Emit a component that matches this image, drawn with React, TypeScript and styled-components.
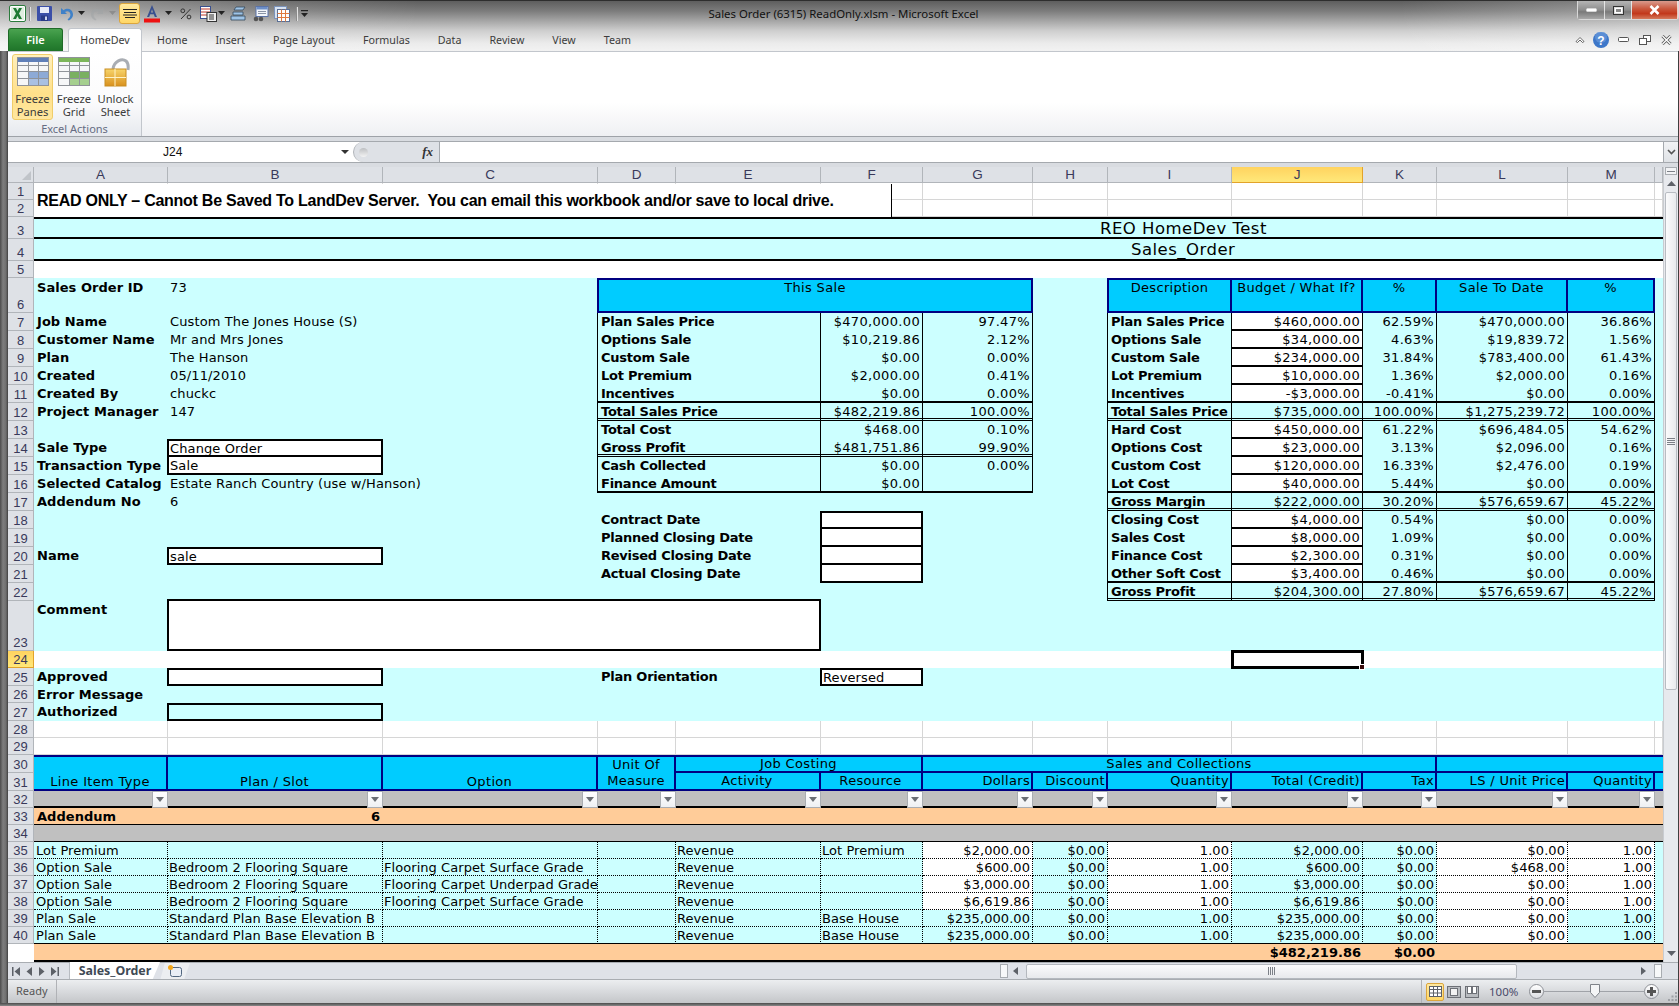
import React from "react";
import styled, { createGlobalStyle } from "styled-components";

const GlobalStyle = createGlobalStyle`
  html, body { margin: 0; padding: 0; background: #fff; }
  #root { width: 1679px; height: 1006px; overflow: hidden; }
`;

const UI = `"Noto Sans", "Open Sans", "Liberation Sans", sans-serif`;
const CELLFONT = `"DejaVu Sans", "Liberation Sans", sans-serif`;
const NAVY2 = "2px solid #000080";
const K1 = "1px solid #000";
const K2 = "2px solid #000";
const K3 = "3px solid #000";
const DBL = "3px double #000";
const DOT = "1px dotted #000";
const CYAN = "#ccffff";
const SKY = "#00ccff";
const PEACH = "#ffcc99";
const GRAY = "#c0c0c0";

const COLS = "ABCDEFGHIJKLMN";
const COL_W = [134, 215, 215, 78, 145, 102, 110, 75, 124, 131, 74, 131, 87, 8];
const ROW_H = [17, 17, 22, 22, 17, 35, ...Array(16).fill(18), 50, 17, 18, 17, 18, 17, 17, 18, 18, 17, 17, 17, 17, 17, 17, 17, 17, 17];
const ci = (l: string) => COLS.indexOf(l);
const topFor = (b?: string) => (b === K2 ? 2 : b === DBL ? 3 : b === K1 ? 1 : 0);

const Window = styled.div`
  position: relative;
  width: 1679px;
  height: 1006px;
  display: flex;
  flex-direction: column;
  overflow: hidden;
  background: #5f5f5f;
`;
const Glass = styled.div`
  height: 51px;
  flex: none;
  display: flex;
  flex-direction: column;
  border-top: 1px solid #2e2e2e;
  box-sizing: border-box;
  background:
    linear-gradient(90deg, rgba(255,255,255,.42) 0, rgba(255,255,255,.12) 260px, rgba(255,255,255,0) 420px, rgba(255,255,255,0) 1400px, rgba(255,255,255,.3) 1679px),
    linear-gradient(180deg, #5e5e5e 0, #7c7c7c 10px, #a6a6a6 20px, #cfcfcf 30px, #ebebeb 42px, #f3f3f3 51px);
`;
const Caption = styled.div`
  height: 27px;
  display: flex;
  align-items: flex-start;
`;
const Qat = styled.div`
  width: 312px;
  height: 27px;
  display: flex;
  align-items: center;
  padding: 0 0 2px 9px;
  box-sizing: border-box;
`;
const QatIcon = styled.svg<{ $ml?: number }>`
  flex: none;
  margin-left: ${(p) => p.$ml ?? 0}px;
`;
const QatHot = styled.div`
  width: 21px;
  height: 21px;
  margin-left: 3px;
  flex: none;
  box-sizing: border-box;
  border: 1px solid #dca63c;
  border-radius: 3px;
  background: linear-gradient(180deg, #ffe9a0, #ffd767);
  display: flex;
  align-items: center;
  justify-content: center;
`;
const Title = styled.div`
  flex: 1;
  padding-right: 202px;
  text-align: center;
  font: 11.4px/26px ${UI};
  color: #111;
`;
const WinButtons = styled.div`
  width: 102px;
  height: 19px;
  display: flex;
  box-sizing: border-box;
  border: 1px solid #d8d8d8;
  border-top: none;
  border-radius: 0 0 4px 4px;
`;
const WinBtn = styled.div<{ $w: number; $close?: boolean }>`
  width: ${(p) => p.$w}px;
  box-sizing: border-box;
  display: flex;
  align-items: center;
  justify-content: center;
  border-right: 1px solid rgba(255,255,255,.7);
  background: ${(p) =>
    p.$close
      ? "linear-gradient(180deg,#d99a8c 0,#c9553a 45%,#c2381b 70%,#d57a5c 100%)"
      : "linear-gradient(180deg,#b5b5b5 0,#8d8d8d 50%,#7a7a7a 60%,#a8a8a8 100%)"};
`;
const TabStrip = styled.div`
  height: 23px;
  display: flex;
  align-items: flex-end;
  padding-left: 8px;
  position: relative;
`;
const FileTab = styled.div`
  width: 55px;
  height: 23px;
  box-sizing: border-box;
  background: linear-gradient(180deg, #4aa350 0, #2f8a38 50%, #1f7429 100%);
  border: 1px solid #1f6a28;
  border-bottom: none;
  border-radius: 3px 3px 0 0;
  color: #fff;
  font: 600 11px/22px ${UI};
  text-align: center;
`;
const ActiveTab = styled.div`
  width: 74px;
  height: 24px;
  margin-left: 5px;
  margin-bottom: -1px;
  box-sizing: border-box;
  background: #fff;
  border: 1px solid #c2c6cc;
  border-bottom: none;
  border-radius: 3px 3px 0 0;
  color: #3c3c3c;
  font: 10.7px/23px ${UI};
  text-align: center;
  position: relative;
  z-index: 1;
`;
const TabLabel = styled.div`
  padding: 0 14px;
  color: #3c3c3c;
  font: 10.7px/22px ${UI};
`;
const TabList = styled.div`
  display: flex;
  padding-left: 1px;
`;
const RibbonTools = styled.div`
  margin-left: auto;
  height: 23px;
  width: 114px;
  display: flex;
  align-items: center;
`;
const ToolIcon = styled.svg<{ $ml: number }>`
  margin-left: ${(p) => p.$ml}px;
  flex: none;
`;
const Frame = styled.div`
  flex: 1;
  min-height: 0;
  display: flex;
  flex-direction: column;
  padding: 0 1px 0 8px;
  background: linear-gradient(90deg, #4b4b4b 0, #7e7e7e 3px, #6f6f6f 6px, #3e3e3e 8px);
`;
const Ribbon = styled.div`
  height: 86px;
  flex: none;
  box-sizing: border-box;
  border-top: 1px solid #c2c6cc;
  border-bottom: 1px solid #9ea2a8;
  background: linear-gradient(180deg, #fff 0, #fff 60%, #eff0f3 100%);
  display: flex;
`;
const RibbonGroup = styled.div`
  width: 134px;
  box-sizing: border-box;
  border-right: 1px solid #c2c6cc;
  background: linear-gradient(180deg, #fff 0, #fbfbfc 60%, #e6e9ee 100%);
  display: flex;
  flex-direction: column;
  padding: 2px 0 0 4px;
`;
const GroupButtons = styled.div`
  display: flex;
  height: 68px;
`;
const BigButton = styled.div<{ $hot?: boolean; $w: number }>`
  width: ${(p) => p.$w}px;
  height: 66px;
  box-sizing: border-box;
  border: 1px solid ${(p) => (p.$hot ? "#f0cd6a" : "transparent")};
  border-radius: 3px;
  background: ${(p) => (p.$hot ? "linear-gradient(180deg,#fff0bd,#ffe08a 60%,#ffe79f)" : "none")};
  display: flex;
  flex-direction: column;
  align-items: center;
  padding-top: 2px;
  font: 11.2px/13px ${UI};
  color: #3c3c3c;
  text-align: center;
`;
const IconSlot = styled.div`
  height: 35px;
  flex: none;
`;
const GroupName = styled.div`
  font: 11px/14px ${UI};
  color: #666c82;
  text-align: center;
  padding-right: 4px;
`;
const GapBar = styled.div`
  height: 4px;
  flex: none;
  background: #d9dce1;
`;
const FormulaBar = styled.div`
  height: 22px;
  flex: none;
  box-sizing: border-box;
  display: flex;
  border-top: 1px solid #a5a9ae;
  border-bottom: 1px solid #a5a9ae;
  background: #fff;
`;
const NameBox = styled.div`
  width: 345px;
  display: flex;
  align-items: center;
  padding-left: 155px;
  box-sizing: border-box;
  font: 12px/20px "Liberation Sans", sans-serif;
  color: #111;
  position: relative;
`;
const Caret = styled.span`
  position: absolute;
  right: 4px;
  top: 8px;
  width: 0;
  height: 0;
  border-left: 4px solid transparent;
  border-right: 4px solid transparent;
  border-top: 4px solid #333;
`;
const FxZone = styled.div`
  width: 87px;
  box-sizing: border-box;
  background: #dee1e6;
  border-left: 1px solid #b0b4b9;
  border-right: 1px solid #a5a9ae;
  border-radius: 12px 0 0 12px;
  display: flex;
  align-items: center;
  justify-content: space-between;
  padding: 0 6px 0 5px;
`;
const GhostDot = styled.span`
  width: 9px;
  height: 9px;
  border-radius: 50%;
  background: linear-gradient(180deg,#bdbfc2,#f3f3f3);
`;
const Fx = styled.span`
  font: italic 700 13px/16px "Liberation Serif", serif;
  color: #333;
`;
const FormulaInput = styled.div`
  flex: 1;
`;
const ExpandBtn = styled.div`
  width: 15px;
  box-sizing: border-box;
  border-left: 1px solid #a5a9ae;
  background: linear-gradient(180deg, #f2f3f5, #dfe2e6);
  display: flex;
  align-items: center;
  justify-content: center;
`;
const WorkArea = styled.div`
  display: flex;
  height: 795px;
  flex: none;
`;
const Sheet = styled.div`
  position: relative;
  width: 1655px;
  flex: none;
  display: grid;
  grid-template-columns: 26px ${COL_W.join("px ")}px;
  grid-template-rows: 16px ${ROW_H.join("px ")}px;
  background: #fff;
  font: 13px/16px ${CELLFONT};
  letter-spacing: 0.33px;
  color: #000;
  white-space: nowrap;
  overflow: hidden;
`;
const Corner = styled.div`
  grid-column: 1;
  grid-row: 1;
  box-sizing: border-box;
  background: #dee1e6;
  border-right: 1px solid #b1b5ba;
  border-bottom: 1px solid #b1b5ba;
  position: relative;
  &::after {
    content: "";
    position: absolute;
    right: 2px;
    bottom: 2px;
    border-left: 9px solid transparent;
    border-bottom: 9px solid #c0c4c9;
  }
`;
const ColHead = styled.div<{ $c: number; $active?: boolean }>`
  grid-column: ${(p) => p.$c + 2};
  grid-row: 1;
  box-sizing: border-box;
  background: ${(p) => (p.$active ? "linear-gradient(180deg,#ffd35f,#ffe87a)" : "#dee1e6")};
  border-right: 1px solid ${(p) => (p.$active ? "#e2a32a" : "#b1b5ba")};
  border-bottom: 1px solid ${(p) => (p.$active ? "#e2a32a" : "#b1b5ba")};
  font: 13.5px/15px "Liberation Sans", sans-serif;
  letter-spacing: 0;
  color: #39395a;
  text-align: center;
`;
const RowHead = styled.div<{ $r: number; $active?: boolean }>`
  grid-column: 1;
  grid-row: ${(p) => p.$r + 1};
  box-sizing: border-box;
  background: ${(p) => (p.$active ? "linear-gradient(180deg,#ffd35f,#ffe87a)" : "#dee1e6")};
  border-right: 1px solid ${(p) => (p.$active ? "#e2a32a" : "#b1b5ba")};
  border-bottom: 1px solid ${(p) => (p.$active ? "#e2a32a" : "#b1b5ba")};
  font: 13px/15px "Liberation Sans", sans-serif;
  letter-spacing: 0;
  color: #39395a;
  text-align: center;
  display: flex;
  align-items: flex-end;
  justify-content: center;
`;
const GridCell = styled.div<{ $c: number; $r: number }>`
  grid-column: ${(p) => p.$c + 2};
  grid-row: ${(p) => p.$r + 1};
  box-sizing: border-box;
  border-right: 1px solid #d6d6d6;
  border-bottom: 1px solid #d6d6d6;
`;
const Band = styled.div<{ $r: number; $rs?: number; $bg: string; $bt?: string; $bb?: string }>`
  grid-column: 2 / -1;
  grid-row: ${(p) => p.$r + 1} / span ${(p) => p.$rs ?? 1};
  box-sizing: border-box;
  background: ${(p) => p.$bg};
  border-top: ${(p) => p.$bt ?? "none"};
  border-bottom: ${(p) => p.$bb ?? "none"};
`;

type CellProps = {
  $c: number;
  $r: number;
  $cs?: number;
  $rs?: number;
  $bg?: string;
  $bt?: string;
  $br?: string;
  $bb?: string;
  $bl?: string;
  $al?: string;
  $va?: string;
  $pad?: string;
};
const Cell = styled.div<CellProps>`
  grid-column: ${(p) => p.$c + 2} / span ${(p) => p.$cs ?? 1};
  grid-row: ${(p) => p.$r + 1} / span ${(p) => p.$rs ?? 1};
  box-sizing: border-box;
  min-width: 0;
  display: flex;
  justify-content: ${(p) => p.$al ?? "flex-start"};
  align-items: ${(p) => p.$va ?? "center"};
  padding: ${(p) => p.$pad ?? "0 3px"};
  background: ${(p) => p.$bg ?? "transparent"};
  border-top: ${(p) => p.$bt ?? "none"};
  border-right: ${(p) => p.$br ?? "none"};
  border-bottom: ${(p) => p.$bb ?? "none"};
  border-left: ${(p) => p.$bl ?? "none"};
`;
const Label = styled(Cell)<{ $tight?: boolean }>`
  font-weight: 700;
  font-size: 13px;
  letter-spacing: ${(p) => (p.$tight ? "-0.24px" : "0.04px")};
  margin-left: ${(p) => (p.$tight ? "-1px" : "0")};
`;
const FieldText = styled(Cell)`
  letter-spacing: 0.12px;
`;
const InputBox = styled(FieldText)`
  margin-left: -1px;
`;
const DataCell = styled(Cell)`
  letter-spacing: 0.06px;
`;
const HeadCell = styled(Cell)`
  background: ${SKY};
  line-height: 16px;
  text-align: center;
`;
const HeadStart = styled(HeadCell)`
  margin-left: -1px;
`;
const BottomHead = styled(HeadCell)`
  line-height: 15px;
`;
const CommentBox = styled(InputBox)`
  margin-top: -2px;
`;
const BandTitle = styled(Cell)<{ $indent: number; $top: number }>`
  font-size: 16.5px;
  line-height: 20px;
  letter-spacing: 0.48px;
  padding: ${(p) => p.$top}px 0 0 ${(p) => p.$indent}px;
`;
const TextBox = styled.div`
  position: absolute;
  left: 26px;
  top: 17px;
  width: 858px;
  height: 33px;
  box-sizing: border-box;
  background: #fff;
  border-right: 1px solid #000;
  font: 700 16px/33px "Liberation Sans", sans-serif;
  letter-spacing: -0.26px;
  padding-left: 3px;
  white-space: pre;
`;
const FilterBtn = styled.span`
  width: 16px;
  height: 17px;
  box-sizing: border-box;
  border: 1px solid #a9adb2;
  background: linear-gradient(180deg, #fff, #eef0f3);
  display: flex;
  align-items: center;
  justify-content: center;
  &::after {
    content: "";
    border-left: 4px solid transparent;
    border-right: 4px solid transparent;
    border-top: 5px solid #6a6e74;
  }
`;
const FillHandle = styled.span`
  position: absolute;
  right: -4px;
  bottom: -4px;
  width: 6px;
  height: 6px;
  background: #3a0c0c;
  border: 1px solid #fff;
  box-sizing: border-box;
`;
const Selected = styled(Cell)`
  position: relative;
  z-index: 2;
  margin: -1px;
`;
const TotalText = styled.span`
  font-weight: 700;
  font-size: 13px;
  letter-spacing: 0;
`;
const VScroll = styled.div`
  width: 14px;
  flex: none;
  display: flex;
  flex-direction: column;
  background: #e7e9ed;
  border-left: 1px solid #c8cbd0;
`;
const ScrollCap = styled.div<{ $h: number }>`
  height: ${(p) => p.$h}px;
  flex: none;
  display: flex;
  align-items: center;
  justify-content: center;
`;
const SplitBox = styled.div`
  height: 8px;
  margin: 0 1px;
  background: #f2f3f5;
  border: 1px solid #a8acb1;
  box-sizing: border-box;
  display: flex;
  align-items: center;
  justify-content: center;
  flex: none;
`;
const SplitDash = styled.div`
  width: 8px;
  height: 1px;
  background: #7c8087;
`;
const VThumb = styled.div`
  height: 498px;
  flex: none;
  margin: 0 1px;
  box-sizing: border-box;
  border: 1px solid #b8bcc2;
  border-radius: 2px;
  background: linear-gradient(90deg, #fbfbfc, #e8eaed);
  display: flex;
  align-items: center;
  justify-content: center;
`;
const VTrack = styled.div`
  flex: 1;
`;
const Grip = styled.div<{ $v?: boolean }>`
  width: ${(p) => (p.$v ? 8 : 7)}px;
  height: ${(p) => (p.$v ? 7 : 8)}px;
  background: ${(p) =>
    p.$v
      ? "repeating-linear-gradient(180deg,#7c8087 0,#7c8087 1px,transparent 1px,transparent 2px)"
      : "repeating-linear-gradient(90deg,#7c8087 0,#7c8087 1px,transparent 1px,transparent 2px)"};
`;
const TabBar = styled.div`
  height: 18px;
  flex: none;
  box-sizing: border-box;
  display: flex;
  align-items: stretch;
  background: #dfe2e8;
  border-top: 1px solid #a9adb2;
  border-bottom: 1px solid #a9adb2;
`;
const NavIcons = styled.div`
  width: 62px;
  display: flex;
  align-items: center;
  padding-left: 4px;
  gap: 5px;
  box-sizing: border-box;
  border-right: 1px solid #b8bcc2;
`;
const SheetTab = styled.div`
  width: 90px;
  margin-top: -1px;
  box-sizing: border-box;
  background: #fff;
  font: 700 12.4px/18px ${UI};
  color: #3f4a55;
  text-align: center;
  clip-path: polygon(0 0, 100% 0, 92% 100%, 0 100%);
`;
const NewTab = styled.div`
  width: 36px;
  margin-left: -6px;
  display: flex;
  align-items: center;
  padding-left: 13px;
  box-sizing: border-box;
  background: #eceef1;
  clip-path: polygon(18% 100%, 30% 0, 100% 0, 84% 100%);
`;
const TabGap = styled.div`
  width: 810px;
`;
const HScroll = styled.div`
  flex: 1;
  display: flex;
  align-items: center;
  padding-right: 16px;
`;
const SplitH = styled.div<{ $ml?: number }>`
  width: 8px;
  height: 14px;
  flex: none;
  margin-left: ${(p) => p.$ml ?? 0}px;
  box-sizing: border-box;
  border: 1px solid #a8acb1;
  background: #f7f8f9;
`;
const HThumb = styled.div`
  width: 491px;
  height: 15px;
  flex: none;
  box-sizing: border-box;
  margin-left: 8px;
  border: 1px solid #b4b8be;
  border-radius: 2px;
  background: linear-gradient(180deg, #fbfbfc, #e7e9ec);
  display: flex;
  align-items: center;
  justify-content: center;
`;
const ArrowL = styled.span`
  margin-left: 5px;
  flex: none;
  border-top: 4px solid transparent;
  border-bottom: 4px solid transparent;
  border-right: 5px solid #5d6168;
`;
const ArrowR = styled.span`
  margin-left: auto;
  flex: none;
  border-top: 4px solid transparent;
  border-bottom: 4px solid transparent;
  border-left: 5px solid #5d6168;
`;
const StatusBar = styled.div`
  height: 23px;
  flex: none;
  box-sizing: border-box;
  display: flex;
  align-items: center;
  background: linear-gradient(180deg, #eceef0 0, #dadcdf 45%, #c4c6c9 100%);
  color: #555;
  font: 11px/20px ${UI};
`;
const Ready = styled.div`
  width: 49px;
  height: 100%;
  box-sizing: border-box;
  padding-left: 8px;
  line-height: 21px;
  border-right: 1px solid #b0b2b6;
`;
const StatusRight = styled.div`
  margin-left: auto;
  width: 257px;
  height: 100%;
  box-sizing: border-box;
  border-left: 1px solid #b0b2b6;
  display: flex;
  align-items: center;
  padding-left: 4px;
`;
const ViewBtn = styled.div<{ $hot?: boolean; $ml?: number }>`
  width: 18px;
  height: 18px;
  flex: none;
  margin-left: ${(p) => p.$ml ?? 0}px;
  box-sizing: border-box;
  display: flex;
  align-items: center;
  justify-content: center;
  border: 1px solid ${(p) => (p.$hot ? "#dca63c" : "transparent")};
  border-radius: 2px;
  background: ${(p) => (p.$hot ? "linear-gradient(180deg,#ffe9a0,#ffd767)" : "none")};
`;
const Zoom = styled.div`
  width: 40px;
  margin-left: 8px;
  flex: none;
  color: #4a4a6a;
  font-size: 11.5px;
`;
const RoundBtn = styled.div`
  width: 15px;
  height: 15px;
  flex: none;
  box-sizing: border-box;
  border-radius: 50%;
  border: 1px solid #8d9096;
  background: linear-gradient(180deg, #fff, #dcdee2);
  display: flex;
  align-items: center;
  justify-content: center;
  svg { display: block; }
`;
const Slider = styled.div`
  width: 100px;
  height: 1px;
  flex: none;
  background: #a0a3a8;
  position: relative;
`;
const SliderThumb = styled.svg`
  position: absolute;
  left: 46px;
  top: -7px;
`;
const ResizeGrip = styled.svg`
  margin-left: auto;
  flex: none;
  align-self: flex-end;
  margin-bottom: 1px;
`;
const BottomEdge = styled.div`
  height: 3px;
  flex: none;
  margin: 0 -1px 0 -8px;
  background: linear-gradient(180deg, #4a4a4a, #8a8a8a);
`;

const Amt = ({ c, r, bb, children, ...rest }: any) => (
  <Cell $c={ci(c)} $r={r} $al="flex-end" $bb={bb} $pad={`${topFor(bb)}px 2px 0 0`} {...rest}>
    {children}
  </Cell>
);

/* ---- icons ---- */
const Tri = ({ c = "#222", ml = 4 }: { c?: string; ml?: number }) => (
  <QatIcon $ml={ml} width="7" height="5" viewBox="0 0 7 5">
    <path d="M0 0h7L3.5 4z" fill={c} />
  </QatIcon>
);
const Sep = ({ ml }: { ml: number }) => (
  <QatIcon $ml={ml} width="2" height="14" viewBox="0 0 2 14">
    <rect width="1" height="14" fill="#8c8c8c" />
    <rect x="1" width="1" height="14" fill="#e2e2e2" />
  </QatIcon>
);
const GridIcon = ({ bar, hi, hi2 }: { bar: string; hi: string; hi2: string }) => (
  <svg width="32" height="29" viewBox="0 0 32 29">
    <rect x="0.5" y="0.5" width="31" height="28" fill="#f6f7f8" stroke="#8f9399" />
    <rect x="1" y="1" width="30" height="4" fill={bar} />
    <rect x="12" y="15" width="19" height="13" fill={hi} />
    <rect x="12" y="15" width="19" height="6" fill={hi2} />
    <path d="M1 8.5h30M1 14.5h30M1 21.5h30M11.5 5v23M21.5 5v23" stroke="#8f9399" fill="none" />
  </svg>
);

const leftLabels: [number, string, string?][] = [
  [6, "Sales Order ID", "73"],
  [7, "Job Name", "Custom The Jones House (S)"],
  [8, "Customer Name", "Mr and Mrs Jones"],
  [9, "Plan", "The Hanson"],
  [10, "Created", "05/11/2010"],
  [11, "Created By", "chuckc"],
  [12, "Project Manager", "147"],
  [14, "Sale Type"],
  [15, "Transaction Type"],
  [16, "Selected Catalog", "Estate Ranch Country (use w/Hanson)"],
  [17, "Addendum No", "6"],
  [20, "Name"],
  [23, "Comment"],
  [25, "Approved"],
  [26, "Error Message"],
  [27, "Authorized"],
];
const saleRows: [number, string, string, string, string?][] = [
  [7, "Plan Sales Price", "$470,000.00", "97.47%"],
  [8, "Options Sale", "$10,219.86", "2.12%"],
  [9, "Custom Sale", "$0.00", "0.00%"],
  [10, "Lot Premium", "$2,000.00", "0.41%"],
  [11, "Incentives", "$0.00", "0.00%", K2],
  [12, "Total Sales Price", "$482,219.86", "100.00%", DBL],
  [13, "Total Cost", "$468.00", "0.10%"],
  [14, "Gross Profit", "$481,751.86", "99.90%", DBL],
  [15, "Cash Collected", "$0.00", "0.00%"],
  [16, "Finance Amount", "$0.00", "", K2],
];
const budgetRows: [number, string, string, string, string, string, string?, boolean?][] = [
  [7, "Plan Sales Price", "$460,000.00", "62.59%", "$470,000.00", "36.86%"],
  [8, "Options Sale", "$34,000.00", "4.63%", "$19,839.72", "1.56%"],
  [9, "Custom Sale", "$234,000.00", "31.84%", "$783,400.00", "61.43%"],
  [10, "Lot Premium", "$10,000.00", "1.36%", "$2,000.00", "0.16%"],
  [11, "Incentives", "-$3,000.00", "-0.41%", "$0.00", "0.00%", K2],
  [12, "Total Sales Price", "$735,000.00", "100.00%", "$1,275,239.72", "100.00%", DBL, true],
  [13, "Hard Cost", "$450,000.00", "61.22%", "$696,484.05", "54.62%"],
  [14, "Options Cost", "$23,000.00", "3.13%", "$2,096.00", "0.16%"],
  [15, "Custom Cost", "$120,000.00", "16.33%", "$2,476.00", "0.19%"],
  [16, "Lot Cost", "$40,000.00", "5.44%", "$0.00", "0.00%", K2],
  [17, "Gross Margin", "$222,000.00", "30.20%", "$576,659.67", "45.22%", DBL, true],
  [18, "Closing Cost", "$4,000.00", "0.54%", "$0.00", "0.00%"],
  [19, "Sales Cost", "$8,000.00", "1.09%", "$0.00", "0.00%"],
  [20, "Finance Cost", "$2,300.00", "0.31%", "$0.00", "0.00%"],
  [21, "Other Soft Cost", "$3,400.00", "0.46%", "$0.00", "0.00%", K2],
  [22, "Gross Profit", "$204,300.00", "27.80%", "$576,659.67", "45.22%", DBL, true],
];
const dateRows: [number, string][] = [
  [18, "Contract Date"],
  [19, "Planned Closing Date"],
  [20, "Revised Closing Date"],
  [21, "Actual Closing Date"],
];
const subHeads: [string, string, string][] = [
  ["E", "Activity", "center"],
  ["F", "Resource", "center"],
  ["G", "Dollars", "flex-end"],
  ["H", "Discount", "flex-end"],
  ["I", "Quantity", "flex-end"],
  ["J", "Total (Credit)", "flex-end"],
  ["K", "Tax", "flex-end"],
  ["L", "LS / Unit Price", "flex-end"],
  ["M", "Quantity", "flex-end"],
];
const lines: string[][] = [
  ["Lot Premium", "", "", "", "Revenue", "Lot Premium", "$2,000.00", "$0.00", "1.00", "$2,000.00", "$0.00", "$0.00", "1.00"],
  ["Option Sale", "Bedroom 2 Flooring Square", "Flooring Carpet Surface Grade", "", "Revenue", "", "$600.00", "$0.00", "1.00", "$600.00", "$0.00", "$468.00", "1.00"],
  ["Option Sale", "Bedroom 2 Flooring Square", "Flooring Carpet Underpad Grade", "", "Revenue", "", "$3,000.00", "$0.00", "1.00", "$3,000.00", "$0.00", "$0.00", "1.00"],
  ["Option Sale", "Bedroom 2 Flooring Square", "Flooring Carpet Surface Grade", "", "Revenue", "", "$6,619.86", "$0.00", "1.00", "$6,619.86", "$0.00", "$0.00", "1.00"],
  ["Plan Sale", "Standard Plan Base Elevation B", "", "", "Revenue", "Base House", "$235,000.00", "$0.00", "1.00", "$235,000.00", "$0.00", "$0.00", "1.00"],
  ["Plan Sale", "Standard Plan Base Elevation B", "", "", "Revenue", "Base House", "$235,000.00", "$0.00", "1.00", "$235,000.00", "$0.00", "$0.00", "1.00"],
];

const whiteData = (row: number, col: number) => {
  if (col === 11) return true;
  if (row < 4 && (col === 6 || col === 8 || col === 12)) return true;
  return false;
};

export default function App() {
  return (
    <>
      <GlobalStyle />
      <Window>
        <Glass>
          <Caption>
            <Qat>
              <QatIcon width="17" height="17" viewBox="0 0 17 17">
                <rect x="0.5" y="0.5" width="16" height="16" rx="1.5" fill="#fff" stroke="#2b7b3d" />
                <rect x="2" y="2" width="13" height="13" fill="#dfeee0" />
                <path d="M4 3h3l1.5 3L10 3h3l-3 5.5L13 14h-3l-1.5-3L7 14H4l3-5.5z" fill="#1f7a34" />
              </QatIcon>
              <Sep ml={3} />
              <QatIcon $ml={6} width="15" height="15" viewBox="0 0 15 15">
                <rect width="15" height="15" rx="1" fill="#3b4fa8" />
                <rect x="3" y="1" width="9" height="6" fill="#e8ebf8" />
                <rect x="4" y="9.5" width="7" height="5.5" fill="#2a3a85" />
                <rect x="8" y="10.5" width="2" height="3.5" fill="#cfd5ef" />
              </QatIcon>
              <QatIcon $ml={8} width="14" height="15" viewBox="0 0 14 15">
                <path d="M1 2v6h6L5 6c2.4-1.6 5-.6 5.4 2.2.2 1.8-.8 3.800-2.900 5l1.200 1.300c3-1.200 4.800-4.200 4.200-7C12.200 3 7.400 1.300 3.600 4.200z" fill="#3f81c8" />
              </QatIcon>
              <Tri ml={4} />
              <QatIcon $ml={6} width="13" height="15" viewBox="0 0 13 15" style={{ opacity: 0.55 }}>
                <path d="M12 2v6H6l2-2C5.600 4.400 3 5.400 2.600 8.200c-.2 1.800.8 3.800 2.900 5l-1.200 1.300c-3-1.200-4.800-4.200-4.200-7C.8 3 5.600 1.300 9.400 4.200z" fill="#a0a4a6" />
              </QatIcon>
              <Tri c="#8d8d8d" ml={5} />
              <QatHot>
                <QatIcon width="14" height="9" viewBox="0 0 14 9">
                  <path d="M0 .5h14M1 3.500h12M0 6h14M2 8.500h10" stroke="#222" fill="none" />
                </QatIcon>
              </QatHot>
              <QatIcon $ml={4} width="16" height="18" viewBox="0 0 16 18">
                <path d="M8 0L3 12h2.200l1-2.700h3.600l1 2.700H13zM6.900 7.500L8 4.300l1.100 3.200z" fill="#39508f" />
                <rect y="13.500" width="16" height="4" fill="#ee1111" />
              </QatIcon>
              <Tri ml={5} />
              <QatIcon $ml={8} width="12" height="12" viewBox="0 0 12 12">
                <path d="M1 11L10.500 1" stroke="#333" fill="none" />
                <circle cx="2.800" cy="2.800" r="1.900" fill="none" stroke="#333" />
                <circle cx="9" cy="9" r="1.900" fill="none" stroke="#333" />
              </QatIcon>
              <QatIcon $ml={8} width="17" height="16" viewBox="0 0 17 16">
                <rect x="0.5" y="0.500" width="10" height="12" fill="#fff" stroke="#39508f" />
                <path d="M1 3h9M1 6h9M1 9h9" stroke="#c0392b" />
                <rect x="7" y="6.500" width="9.500" height="9" fill="#f0f0f0" stroke="#333" />
                <path d="M9 9h5M9 11h5M9 13h5" stroke="#333" />
              </QatIcon>
              <Tri ml={1} />
              <QatIcon $ml={5} width="16" height="15" viewBox="0 0 16 15">
                <path d="M4 4h9l2-3H6zM3 6h10v3H3zM1 10h14v4H1z" fill="#9fc4e6" stroke="#34495e" strokeWidth="0.800" />
              </QatIcon>
              <QatIcon $ml={7} width="16" height="16" viewBox="0 0 16 16">
                <rect x="3" y="0.500" width="12" height="10" fill="#f3f6fb" stroke="#5a73a8" />
                <rect x="3.500" y="1" width="11" height="2.500" fill="#6d8fc8" />
                <path d="M5 5.500h8M5 7.500h8" stroke="#8a94a6" />
                <circle cx="3" cy="13" r="2.300" fill="#555" />
                <circle cx="8" cy="13" r="2.300" fill="#555" />
              </QatIcon>
              <QatIcon $ml={5} width="16" height="16" viewBox="0 0 16 16">
                <rect x="0.500" y="0.500" width="12" height="12" fill="#d8e3f2" stroke="#7c93ba" />
                <rect x="3.500" y="3.500" width="12" height="12" fill="#fff" stroke="#5a6f95" />
                <path d="M3.500 7.500h12M3.500 11.500h12M7.500 3.500v12M11.500 3.500v12" stroke="#e07a3f" />
              </QatIcon>
              <Sep ml={6} />
              <QatIcon $ml={3} width="7" height="7" viewBox="0 0 7 7">
                <rect width="7" height="1.200" fill="#222" />
                <path d="M0 3h7L3.500 7z" fill="#222" />
              </QatIcon>
            </Qat>
            <Title>Sales Order (6315) ReadOnly.xlsm - Microsoft Excel</Title>
            <WinButtons>
              <WinBtn $w={27}>
                <svg width="11" height="4" viewBox="0 0 11 4">
                  <rect width="11" height="4" rx="1" fill="#fff" stroke="#555" strokeWidth="0.500" />
                </svg>
              </WinBtn>
              <WinBtn $w={27}>
                <svg width="11" height="9" viewBox="0 0 11 9">
                  <rect x="0.500" y="0.500" width="10" height="8" fill="#ddd" stroke="#333" />
                  <rect x="2.500" y="2.500" width="6" height="4" fill="#888" stroke="#fff" />
                </svg>
              </WinBtn>
              <WinBtn $w={46} $close>
                <svg width="11" height="10" viewBox="0 0 11 10">
                  <path d="M1.500 1l8 8M9.500 1l-8 8" stroke="#fff" strokeWidth="2.600" />
                </svg>
              </WinBtn>
            </WinButtons>
          </Caption>
          <TabStrip>
            <FileTab>File</FileTab>
            <ActiveTab>HomeDev</ActiveTab>
            <TabList>
              {["Home", "Insert", "Page Layout", "Formulas", "Data", "Review", "View", "Team"].map((t) => (
                <TabLabel key={t}>{t}</TabLabel>
              ))}
            </TabList>
            <RibbonTools>
              <ToolIcon $ml={10} width="10" height="8" viewBox="0 0 10 8">
                <path d="M1 5.500L5 1.500l4 4-1.500 1L5 4 2.500 6.500z" fill="#fff" stroke="#444" strokeWidth="0.800" />
              </ToolIcon>
              <ToolIcon $ml={8} width="16" height="16" viewBox="0 0 16 16">
                <circle cx="8" cy="8" r="8" fill="#3d77c9" />
                <circle cx="8" cy="5" r="6" fill="#7aa6e2" opacity="0.500" />
                <text x="8" y="12.500" textAnchor="middle" fontSize="12" fontWeight="700" fontFamily="Liberation Sans" fill="#fff">?</text>
              </ToolIcon>
              <ToolIcon $ml={9} width="11" height="5" viewBox="0 0 11 5">
                <rect x="0.500" y="0.500" width="10" height="4" rx="1" fill="#fff" stroke="#555" />
              </ToolIcon>
              <ToolIcon $ml={10} width="12" height="10" viewBox="0 0 12 10">
                <rect x="4.500" y="0.500" width="7" height="6" fill="#fff" stroke="#555" />
                <rect x="0.500" y="3.500" width="7" height="6" fill="#fff" stroke="#555" />
              </ToolIcon>
              <ToolIcon $ml={10} width="11" height="10" viewBox="0 0 11 10">
                <path d="M1.500 1l8 8M9.500 1l-8 8" stroke="#555" strokeWidth="3" />
                <path d="M1.500 1l8 8M9.500 1l-8 8" stroke="#fff" strokeWidth="1.400" />
              </ToolIcon>
            </RibbonTools>
          </TabStrip>
        </Glass>
        <Frame>
          <Ribbon>
            <RibbonGroup>
              <GroupButtons>
                <BigButton $hot $w={41}>
                  <IconSlot><GridIcon bar="#5f7fb8" hi="#a9c0e2" hi2="#8daad6" /></IconSlot>
                  <span>Freeze<br />Panes</span>
                </BigButton>
                <BigButton $w={42}>
                  <IconSlot><GridIcon bar="#7cb65a" hi="#a5cf8f" hi2="#7ab060" /></IconSlot>
                  <span>Freeze<br />Grid</span>
                </BigButton>
                <BigButton $w={41}>
                  <IconSlot>
                    <svg width="30" height="32" viewBox="0 0 30 32">
                      <path d="M12 12C13 4 21 1 25 4c2.500 2 2.500 5 2 9" fill="none" stroke="#a9adb3" strokeWidth="3" />
                      <defs>
                        <linearGradient id="lk" x1="0" y1="0" x2="0" y2="1">
                          <stop offset="0" stopColor="#f7d46a" />
                          <stop offset="1" stopColor="#d9911e" />
                        </linearGradient>
                      </defs>
                      <rect x="4" y="12" width="21" height="17" fill="url(#lk)" stroke="#c88d22" />
                      <path d="M4 20.500h21M14 12v17" stroke="#fff3c8" />
                    </svg>
                  </IconSlot>
                  <span>Unlock<br />Sheet</span>
                </BigButton>
              </GroupButtons>
              <GroupName>Excel Actions</GroupName>
            </RibbonGroup>
          </Ribbon>
          <GapBar />
          <FormulaBar>
            <NameBox>
              J24
              <Caret />
            </NameBox>
            <FxZone>
              <GhostDot />
              <Fx>fx</Fx>
            </FxZone>
            <FormulaInput />
            <ExpandBtn>
              <svg width="9" height="6" viewBox="0 0 9 6">
                <path d="M1 1l3.500 3.500L8 1" fill="none" stroke="#555" strokeWidth="1.600" />
              </svg>
            </ExpandBtn>
          </FormulaBar>
          <GapBar />
          <WorkArea>
            <Sheet>
              <Corner />
              {COLS.split("").map((l, i) => (
                <ColHead key={l} $c={i} $active={l === "J"}>
                  {l === "N" ? "" : l}
                </ColHead>
              ))}
              {ROW_H.map((_, i) => (
                <RowHead key={i} $r={i + 1} $active={i + 1 === 24}>
                  {i + 1}
                </RowHead>
              ))}
              {[1, 2, 28, 29].map((r) =>
                COL_W.map((_, c) => <GridCell key={`${r}-${c}`} $c={c} $r={r} />)
              )}
              <Band $r={3} $bg={CYAN} $bt={K2} $bb={K2} />
              <Band $r={4} $bg={CYAN} $bb={K2} />
              <Band $r={6} $rs={18} $bg={CYAN} />
              <Band $r={25} $rs={3} $bg={CYAN} />
              <Band $r={30} $rs={2} $bg={SKY} $bt={NAVY2} $bb={NAVY2} />
              <Band $r={32} $bg={GRAY} $bb={K2} />
              <Band $r={33} $bg={PEACH} $bb={K1} />
              <Band $r={34} $bg={GRAY} $bb={K1} />
              <Band $r={35} $rs={6} $bg={CYAN} $bb={K1} />
              <Band $r={41} $bg={PEACH} $bb={K2} />

              <BandTitle $c={0} $cs={14} $r={3} $indent={1066} $top={2}>REO HomeDev Test</BandTitle>
              <BandTitle $c={0} $cs={14} $r={4} $indent={1097} $top={0}>Sales_Order</BandTitle>

              {leftLabels.map(([r, l, v]) => (
                <React.Fragment key={r}>
                  <Label $c={0} $r={r} $va={r === 6 || r === 23 ? "flex-start" : "center"} $pad={r === 6 ? "2px 3px 0 3px" : r === 23 ? "1px 3px 0 3px" : "0 3px"}>
                    {l}
                  </Label>
                  {v && (
                    <FieldText $c={1} $r={r} $va={r === 6 ? "flex-start" : "center"} $pad={r === 6 ? "2px 2px 0" : "0 2px"}>
                      {v}
                    </FieldText>
                  )}
                </React.Fragment>
              ))}
              <InputBox $c={1} $r={14} $bg="#fff" $bt={K2} $bl={K2} $br={K2} $bb={K2} $pad="1px 1px 0">Change Order</InputBox>
              <InputBox $c={1} $r={15} $bg="#fff" $bl={K2} $br={K2} $bb={K2} $pad="2px 1px 0">Sale</InputBox>
              <InputBox $c={1} $r={20} $bg="#fff" $bt={K2} $bl={K2} $br={K2} $bb={K2} $pad="1px 1px 0">sale</InputBox>
              <CommentBox $c={1} $cs={4} $r={23} $bg="#fff" $bt={K2} $bl={K2} $br={K2} $bb={K2} />
              <InputBox $c={1} $r={25} $bg="#fff" $bt={K2} $bl={K2} $br={K2} $bb={K2} />
              <InputBox $c={1} $r={27} $bt={K2} $bl={K2} $br={K2} $bb={K2} />

              <HeadStart $c={3} $cs={4} $r={6} $al="center" $va="flex-start" $bt={NAVY2} $bl={NAVY2} $br={NAVY2} $bb={NAVY2}>
                This Sale
              </HeadStart>
              {saleRows.map(([r, l, v, p, b]) => (
                <React.Fragment key={r}>
                  <Label $tight $c={3} $cs={2} $r={r} $bl={K1} $br={K1} $bb={b} $pad={`${topFor(b)}px 3px 0 3px`}>{l}</Label>
                  <Amt c="F" r={r} bb={b} $br={K1}>{v}</Amt>
                  <Amt c="G" r={r} bb={b} $br={K1}>{p}</Amt>
                </React.Fragment>
              ))}
              {dateRows.map(([r, l], i) => (
                <React.Fragment key={r}>
                  <Label $tight $c={3} $cs={2} $r={r} $pad="0 3px 0 4px">{l}</Label>
                  <InputBox $c={5} $r={r} $bg="#fff" $bl={K2} $br={K2} $bb={K2} $bt={i === 0 ? K2 : undefined} />
                </React.Fragment>
              ))}
              <Label $tight $c={3} $cs={2} $r={25} $pad="0 3px 0 4px">Plan Orientation</Label>
              <InputBox $c={5} $r={25} $bg="#fff" $bt={K2} $bl={K2} $br={K2} $bb={K2} $pad="1px 1px 0">Reversed</InputBox>

              {["Description", "Budget / What If?", "%", "Sale To Date", "%"].map((t, i) =>
                i === 0 ? (
                  <HeadStart key={i} $c={8} $r={6} $al="center" $va="flex-start" $pad="0" $bt={NAVY2} $br={NAVY2} $bb={NAVY2} $bl={NAVY2}>
                    {t}
                  </HeadStart>
                ) : (
                  <HeadCell key={i} $c={8 + i} $r={6} $al="center" $va="flex-start" $pad="0" $bt={NAVY2} $br={NAVY2} $bb={NAVY2}>
                    {t}
                  </HeadCell>
                )
              )}
              {budgetRows.map(([r, l, b, p, s, q, bb, total]) => (
                <React.Fragment key={r}>
                  <Label $tight $c={8} $r={r} $bl={K1} $br={K1} $bb={bb} $pad={`${topFor(bb)}px 0 0 3px`}>{l}</Label>
                  <Amt c="J" r={r} bb={bb ?? K2} $bg={total ? undefined : "#fff"} $br={K1}>{b}</Amt>
                  <Amt c="K" r={r} bb={bb} $br={K1}>{p}</Amt>
                  <Amt c="L" r={r} bb={bb} $br={K1}>{s}</Amt>
                  <Amt c="M" r={r} bb={bb} $br={K1}>{q}</Amt>
                </React.Fragment>
              ))}

              <Selected $c={9} $r={24} $bt={K3} $bl={K3} $br={K3} $bb={K3}>
                <FillHandle />
              </Selected>

              <BottomHead $c={0} $r={30} $rs={2} $al="center" $va="flex-end" $bt={NAVY2} $br={NAVY2} $bb={NAVY2}>Line Item Type</BottomHead>
              <BottomHead $c={1} $r={30} $rs={2} $al="center" $va="flex-end" $bt={NAVY2} $br={NAVY2} $bb={NAVY2}>Plan / Slot</BottomHead>
              <BottomHead $c={2} $r={30} $rs={2} $al="center" $va="flex-end" $bt={NAVY2} $br={NAVY2} $bb={NAVY2}>Option</BottomHead>
              <HeadCell $c={3} $r={30} $rs={2} $al="center" $bt={NAVY2} $br={NAVY2} $bb={NAVY2} $pad="0">
                <span>Unit Of<br />Measure</span>
              </HeadCell>
              <HeadCell $c={4} $cs={2} $r={30} $al="center" $bt={NAVY2} $br={NAVY2} $bb={NAVY2}>Job Costing</HeadCell>
              <HeadCell $c={6} $cs={5} $r={30} $al="center" $bt={NAVY2} $br={NAVY2} $bb={NAVY2}>Sales and Collections</HeadCell>
              <HeadCell $c={11} $cs={3} $r={30} $bt={NAVY2} $bb={NAVY2} />
              {subHeads.map(([l, t, al]) => (
                <HeadCell key={l + t} $c={ci(l)} $r={31} $al={al} $br={NAVY2} $bb={NAVY2} $pad="0 1px 0 0">{t}</HeadCell>
              ))}
              {COLS.slice(0, 13).split("").map((l, i) => (
                <Cell key={l} $c={i} $r={32} $al="flex-end" $va="flex-start" $pad="0">
                  <FilterBtn />
                </Cell>
              ))}
              <Label $c={0} $r={33} $pad="0 3px">Addendum</Label>
              <Label $c={1} $r={33} $al="flex-end">6</Label>

              {lines.map((cells, ri) =>
                cells.map((t, c) => (
                  <DataCell
                    key={`${ri}-${c}`}
                    $c={c}
                    $r={35 + ri}
                    $al={c >= 6 ? "flex-end" : "flex-start"}
                    $bg={whiteData(ri, c) ? "#fff" : undefined}
                    $br={DOT}
                    $bb={ri === 5 ? K1 : DOT}
                    $pad={c >= 6 ? "2px 2px 0 0" : c === 0 ? "2px 0 0 2px" : "2px 0 0 1px"}
                  >
                    {t}
                  </DataCell>
                ))
              )}
              <Amt c="J" r={41}><TotalText>$482,219.86</TotalText></Amt>
              <Amt c="K" r={41}><TotalText>$0.00</TotalText></Amt>

              <TextBox>{"READ ONLY – Cannot Be Saved To LandDev Server.  You can email this workbook and/or save to local drive."}</TextBox>
            </Sheet>
            <VScroll>
              <SplitBox><SplitDash /></SplitBox>
              <ScrollCap $h={17}>
                <svg width="9" height="5" viewBox="0 0 9 5"><path d="M0 5h9L4.500 0z" fill="#5d6168" /></svg>
              </ScrollCap>
              <VThumb><Grip $v /></VThumb>
              <VTrack />
              <ScrollCap $h={17}>
                <svg width="9" height="5" viewBox="0 0 9 5"><path d="M0 0h9L4.500 5z" fill="#5d6168" /></svg>
              </ScrollCap>
            </VScroll>
          </WorkArea>
          <TabBar>
            <NavIcons>
              <svg width="8" height="9" viewBox="0 0 8 9"><path d="M0 0h1.500v9H0zM8 0v9L2.500 4.500z" fill="#5d6168" /></svg>
              <svg width="8" height="9" viewBox="0 0 8 9"><path d="M7 0v9L1.500 4.500z" fill="#5d6168" /></svg>
              <svg width="8" height="9" viewBox="0 0 8 9"><path d="M1 0v9l5.500-4.500z" fill="#5d6168" /></svg>
              <svg width="8" height="9" viewBox="0 0 8 9"><path d="M8 0H6.500v9H8zM0 0v9l5.500-4.500z" fill="#5d6168" /></svg>
            </NavIcons>
            <SheetTab>Sales_Order</SheetTab>
            <NewTab>
              <svg width="16" height="14" viewBox="0 0 16 14">
                <rect x="3.500" y="3.500" width="11" height="9" rx="2" fill="#e9eef6" stroke="#51667f" />
                <circle cx="3.500" cy="3.500" r="2.500" fill="#f3a71c" />
              </svg>
            </NewTab>
            <TabGap />
            <HScroll>
              <SplitH />
              <ArrowL />
              <HThumb><Grip /></HThumb>
              <ArrowR />
              <SplitH $ml={8} />
            </HScroll>
          </TabBar>
          <StatusBar>
            <Ready>Ready</Ready>
            <StatusRight>
              <ViewBtn $hot>
                <svg width="13" height="11" viewBox="0 0 13 11">
                  <rect x="0.500" y="0.500" width="12" height="10" fill="#fff" stroke="#5d6168" />
                  <path d="M0 3.500h13M0 7h13M4.500 0v11M8.500 0v11" stroke="#5d6168" />
                </svg>
              </ViewBtn>
              <ViewBtn $ml={1}>
                <svg width="14" height="12" viewBox="0 0 14 12">
                  <rect x="0.500" y="0.500" width="13" height="11" fill="#b8bbbf" stroke="#6d7076" />
                  <rect x="3.500" y="2.500" width="7" height="7" fill="#f3f3f3" stroke="#6d7076" />
                </svg>
              </ViewBtn>
              <ViewBtn>
                <svg width="14" height="12" viewBox="0 0 14 12">
                  <rect x="0.500" y="0.500" width="13" height="11" fill="#b8bbbf" stroke="#6d7076" />
                  <rect x="2.500" y="0.500" width="4" height="7" fill="#fff" stroke="#6d7076" />
                  <rect x="7.500" y="0.500" width="4" height="7" fill="#fff" stroke="#6d7076" />
                </svg>
              </ViewBtn>
              <Zoom>100%</Zoom>
              <RoundBtn>
                <svg width="9" height="3" viewBox="0 0 9 3"><rect width="9" height="3" fill="#555" /></svg>
              </RoundBtn>
              <Slider>
                <SliderThumb width="10" height="14" viewBox="0 0 10 14">
                  <path d="M.5.500h9v8l-4.500 5-4.500-5z" fill="#f4f5f6" stroke="#7f8389" />
                </SliderThumb>
              </Slider>
              <RoundBtn>
                <svg width="9" height="9" viewBox="0 0 9 9"><path d="M3 0h3v3h3v3H6v3H3V6H0V3h3z" fill="#555" /></svg>
              </RoundBtn>
              <ResizeGrip width="11" height="11" viewBox="0 0 11 11">
                <path d="M8 1h2v2H8zM4.500 4.500h2v2h-2zM8 4.500h2v2H8zM1 8h2v2H1zM4.500 8h2v2h-2zM8 8h2v2H8z" fill="#9ea1a6" />
              </ResizeGrip>
            </StatusRight>
          </StatusBar>
          <BottomEdge />
        </Frame>
      </Window>
    </>
  );
}
